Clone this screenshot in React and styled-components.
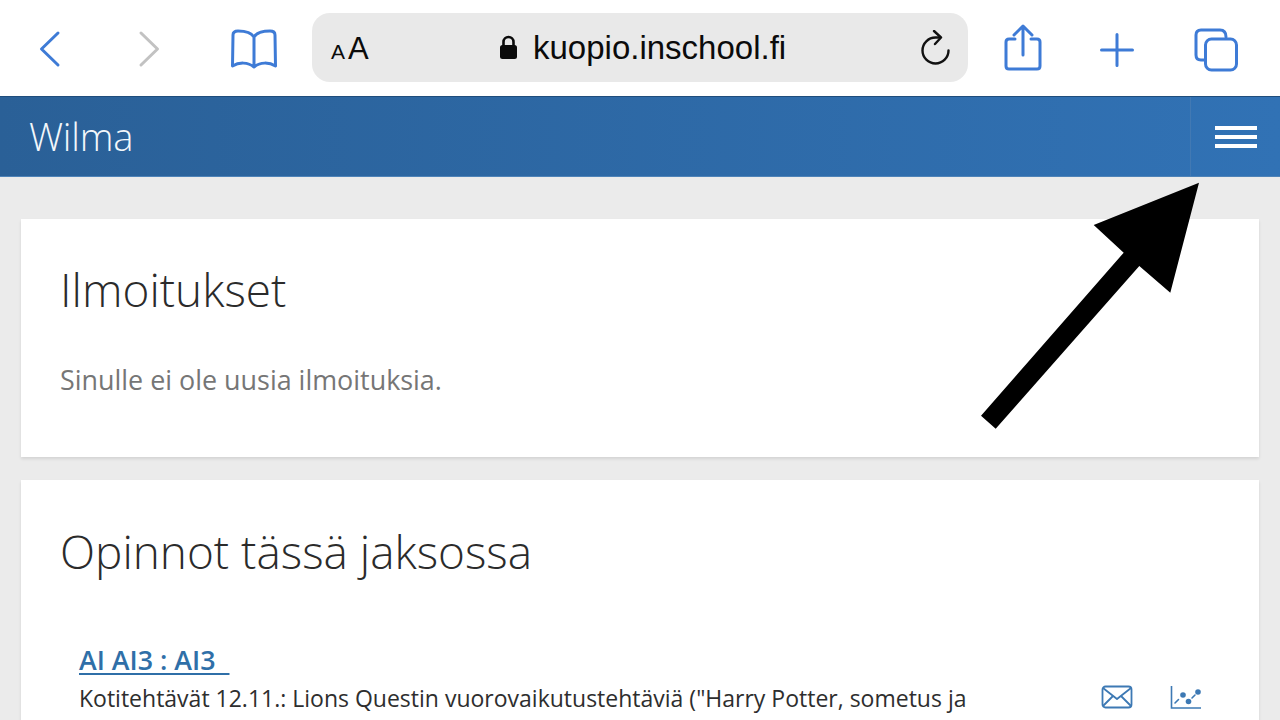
import React from "react";
import styled, { createGlobalStyle } from "styled-components";

const Global = createGlobalStyle`
  html, body { margin: 0; padding: 0; height: 720px; overflow: hidden; background: #ebebeb; }
  #root { height: 720px; }
`;
const Page = styled.div`
  position: relative; width: 1280px; height: 720px; overflow: hidden;
  background: #ebebeb; font-family: "Open Sans", sans-serif;
`;
const BrowserBar = styled.header`
  height: 96px; background: #fff; box-sizing: border-box; position: relative;
  display: flex; align-items: center; padding-bottom: 1px;
`;
const IconSlot = styled.div`
  width: ${p => p.$w}px; margin-left: ${p => p.$ml || 0}px; margin-top: ${p => p.$mt || 0}px; flex: none; display: flex;
  justify-content: center; align-items: center;
  svg { display: block; }
`;
const AddressBar = styled.div`
  width: 656px; height: 69px; margin-left: 35px; flex: none; background: #e9e9e9; border-radius: 18px;
  display: flex; align-items: center; box-sizing: border-box; padding: 0 17px 0 19px;
  font-family: "Liberation Sans", Arial, sans-serif; color: #0b0b0b;
`;
const TextSize = styled.div`
  width: 168px; display: flex; align-items: baseline; flex: none; padding-top: 2px;
  font-size: 31px; line-height: 1; gap: 3px;
  span:first-child { font-size: 21px; }
`;
const Domain = styled.div`
  display: flex; align-items: center; gap: 15px; font-size: 33px; white-space: nowrap; line-height: 1;
`;
const Spacer = styled.div`flex: 1;`;
const Nav = styled.nav`
  height: 81px; box-sizing: border-box; display: flex; align-items: stretch; justify-content: space-between;
  background: linear-gradient(90deg, #2a6097 0%, #3172b5 100%);
  border-top: 1px solid #1f4d7c; border-bottom: 1px solid #4e83b8;
`;
const Brand = styled.div`
  color: #f2f7fb; font-weight: 300; font-size: 38.2px; line-height: 79px; padding-left: 29px; letter-spacing: -0.2px;
`;
const MenuButton = styled.div`
  width: 90px; border-left: 1px solid #4279b3; box-sizing: border-box; display: flex;
  flex-direction: column; align-items: center; justify-content: center; gap: 5px;
  i { display: block; width: 42px; height: 4px; background: #fff; }
`;
const Content = styled.main`
  padding: 42px 21px 0; display: flex; flex-direction: column; gap: 23px;
`;
const Card = styled.section`
  background: #fff; box-shadow: 0 2px 3px rgba(0,0,0,.1); box-sizing: border-box;
  height: ${p => p.$h}px; padding: ${p => p.$pt}px 39px 0; flex: none;
`;
const Heading = styled.h2`
  margin: 0; font-weight: 300; font-size: 45.9px; line-height: 62px; color: #2b2b2b;
`;
const Muted = styled.p`
  margin: 41px 0 0; font-size: 26.9px; line-height: 38px; color: #767676;
`;
const Course = styled.div`
  margin-top: 61px; padding-left: 19px; display: grid; grid-template-columns: 1fr auto; 
`;
const CourseLink = styled.a`
  grid-column: 1 / -1; color: #2f6fa8; font-size: 26.8px; font-weight: 600; line-height: 34px;
  text-decoration: underline; text-underline-offset: 3px; white-space: pre;
`;
const CourseText = styled.div`
  font-size: 23px; line-height: 40px; margin-top: 1px; color: #2e2e2e; white-space: nowrap;
`;
const CourseIcons = styled.div`
  display: flex; gap: 37px; align-items: center; padding-right: 18px; height: 40px;
`;
const ArrowOverlay = styled.svg`
  position: absolute; left: 0; top: 0; pointer-events: none;
`;

const blue = "#3e7bd6";

export default function App() {
  return (
    <Page>
      <Global />
      <BrowserBar>
        <IconSlot $w={24} $ml={38} $mt={3}>
          <svg width="24" height="38" viewBox="0 0 24 38" fill="none" stroke={blue} strokeWidth="3" strokeLinecap="round" strokeLinejoin="round"><path d="M20 3 L3.5 19 L20 35" /></svg>
        </IconSlot>
        <IconSlot $w={24} $ml={75} $mt={3}>
          <svg width="24" height="38" viewBox="0 0 24 38" fill="none" stroke="#c2c2c2" strokeWidth="3" strokeLinecap="round" strokeLinejoin="round"><path d="M4 3 L20.5 19 L4 35" /></svg>
        </IconSlot>
        <IconSlot $w={46} $ml={70} $mt={3}>
          <svg width="46" height="40" viewBox="0 0 46 40" fill="none" stroke={blue} strokeWidth="3" strokeLinecap="round" strokeLinejoin="round"><path d="M23 8 C20 3 14 2 7 2 C4 2 2 3 2 6 L1.5 37 C8 33 17 33 23 38 C29 33 38 33 44.500 37 L44 6 C44 3 42 2 39 2 C32 2 26 3 23 8 Z M23 8 L23 38" /></svg>
        </IconSlot>
        <AddressBar>
          <TextSize><span>A</span><span>A</span></TextSize>
          <Domain>
            <svg width="19" height="25" viewBox="0 0 19 25"><path d="M4.5 11 V7 a5 5 0 0 1 10 0 V11" fill="none" stroke="#0b0b0b" strokeWidth="2.6" /><rect x="1" y="10" width="17" height="14" rx="2.5" fill="#0b0b0b" /></svg>
            <span>kuopio.inschool.fi</span>
          </Domain>
          <Spacer />
          <svg width="30" height="36" viewBox="0 0 30 36" fill="none" stroke="#111" strokeWidth="2.4" strokeLinecap="round" strokeLinejoin="round"><path d="M27.5 20.5 A13 13 0 1 1 14.5 7.5 H18" /><path d="M13 1 L20 7.5 L14 14" /></svg>
        </AddressBar>
        <IconSlot $w={38} $ml={36} $mt={1}>
          <svg width="38" height="48" viewBox="0 0 38 48" fill="none" stroke={blue} strokeWidth="3" strokeLinecap="round" strokeLinejoin="round"><path d="M11 15 H5 Q2 15 2 18 V42 Q2 45 5 45 H33 Q36 45 36 42 V18 Q36 15 33 15 H27" /><path d="M19 31 V3 M10 11 L19 2 L28 11" /></svg>
        </IconSlot>
        <IconSlot $w={34} $ml={58} $mt={5}>
          <svg width="34" height="34" viewBox="0 0 34 34" fill="none" stroke={blue} strokeWidth="3" strokeLinecap="round"><path d="M17 1.5 V32.5 M1.5 17 H32.5" /></svg>
        </IconSlot>
        <IconSlot $w={44} $ml={60} $mt={5}>
          <svg width="44" height="44" viewBox="0 0 44 44" fill="none" stroke={blue} strokeWidth="3" strokeLinecap="round" strokeLinejoin="round"><path d="M11 32 H7 Q2 32 2 27 V7 Q2 2 7 2 H26 Q32 2 32 9" /><rect x="11.5" y="11" width="31" height="31" rx="6" /></svg>
        </IconSlot>
      </BrowserBar>
      <Nav>
        <Brand>Wilma</Brand>
        <MenuButton><i /><i /><i /></MenuButton>
      </Nav>
      <Content>
        <Card $h={238} $pt={39}>
          <Heading>Ilmoitukset</Heading>
          <Muted>Sinulle ei ole uusia ilmoituksia.</Muted>
        </Card>
        <Card $h={300} $pt={40}>
          <Heading>Opinnot tässä jaksossa</Heading>
          <Course>
            <CourseLink href="#">{"AI AI3 : AI3  "}</CourseLink>
            <CourseText>Kotitehtävät 12.11.: Lions Questin vuorovaikutustehtäviä ("Harry Potter, sometus ja</CourseText>
            <CourseIcons>
              <svg width="32" height="24" viewBox="0 0 32 24" fill="none" stroke="#3d79b4" strokeWidth="1.8" strokeLinejoin="round"><rect x="1.500" y="1.500" width="29" height="21" rx="3" /><path d="M2 3 L16 14 L30 3 M2 21 L12 11 M30 21 L20 11" /></svg>
              <svg width="32" height="24" viewBox="0 0 32 24" fill="none" stroke="#3d79b4" strokeWidth="1.6"><path d="M1.500 1 V23 H31" /><path d="M5 18 L8.500 14.500 M22 13 L25 10" strokeLinecap="round" /><g fill="#3d79b4" stroke="none"><circle cx="13" cy="10" r="2.8" /><circle cx="18.500" cy="16.500" r="2.8" /><circle cx="28" cy="7" r="2.800" /></g></svg>
            </CourseIcons>
          </Course>
        </Card>
      </Content>
      <ArrowOverlay width="1280" height="720" viewBox="0 0 1280 720">
        <path d="M1199 182.7 L1093.7 225 L1123.7 252.7 L981 415.7 L995.7 428.7 L1139.3 266 L1170.3 292.7 Z" fill="#000" />
      </ArrowOverlay>
    </Page>
  );
}
